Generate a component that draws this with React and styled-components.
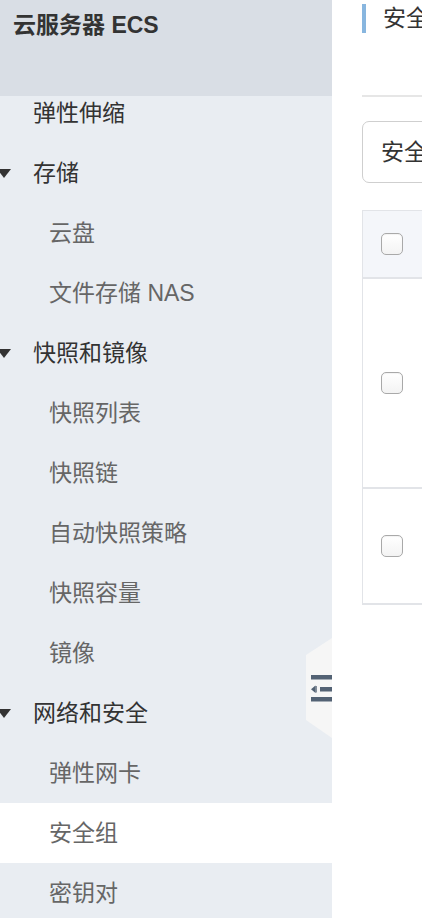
import React from "react";
import styled, { createGlobalStyle } from "styled-components";

const GlobalStyle = createGlobalStyle`
  html, body {
    margin: 0;
    padding: 0;
    background: #fff;
  }
  body {
    font-family: "Liberation Sans", "Noto Sans CJK SC", sans-serif;
  }
`;

const menu = [
  { label: "弹性伸缩", level: 0 },
  { label: "存储", level: 0, group: true },
  { label: "云盘", level: 1 },
  { label: "文件存储 NAS", level: 1 },
  { label: "快照和镜像", level: 0, group: true },
  { label: "快照列表", level: 1 },
  { label: "快照链", level: 1 },
  { label: "自动快照策略", level: 1 },
  { label: "快照容量", level: 1 },
  { label: "镜像", level: 1 },
  { label: "网络和安全", level: 0, group: true },
  { label: "弹性网卡", level: 1 },
  { label: "安全组", level: 1, active: true },
  { label: "密钥对", level: 1 },
];

const rows = [
  { height: 210 },
  { height: 114 },
];

function App() {
  return (
    <>
      <GlobalStyle />
      <Layout>
        <Sidebar>
          <SideHeader>云服务器 ECS</SideHeader>
          <MenuList>
            {menu.map((item) => (
              <MenuItem key={item.label} $level={item.level} $active={item.active}>
                {item.group && <Caret />}
                {item.label}
              </MenuItem>
            ))}
          </MenuList>
          <Toggle>
            <ToggleIcon width="26" height="30" viewBox="0 0 26 30">
              <rect x="5" y="2" width="21" height="4.5" fill="#536274" />
              <rect x="14" y="14" width="12" height="4.5" fill="#536274" />
              <path d="M5 16.2 L9.5 12.5 L9.5 20 Z" fill="#536274" />
              <rect x="9.5" y="13" width="1.2" height="6.5" fill="#536274" />
              <rect x="5" y="24" width="21" height="4.5" fill="#536274" />
            </ToggleIcon>
          </Toggle>
        </Sidebar>
        <Main>
          <TitleRow>
            <TitleBar />
            <Title>安全组</Title>
          </TitleRow>
          <Divider />
          <SelectBox>安全组ID</SelectBox>
          <Table>
            <HeadRow>
              <CheckCell>
                <Checkbox />
              </CheckCell>
            </HeadRow>
            {rows.map((r, i) => (
              <BodyRow key={i} style={{ height: r.height }}>
                <CheckCell>
                  <Checkbox />
                </CheckCell>
              </BodyRow>
            ))}
          </Table>
        </Main>
      </Layout>
    </>
  );
}

export default App;

const Layout = styled.div`
  display: flex;
  width: 422px;
  height: 918px;
  overflow: hidden;
`;

const Sidebar = styled.div`
  position: relative;
  flex: 0 0 332px;
  height: 100%;
  background: #e9edf2;
  overflow: hidden;
`;

const SideHeader = styled.div`
  position: relative;
  z-index: 1;
  height: 96px;
  box-sizing: border-box;
  padding: 9px 0 0 13px;
  background: #d9dee5;
  color: #333;
  font-size: 23px;
  font-weight: bold;
  line-height: 32px;
`;

const MenuList = styled.div`
  margin-top: -13px;
`;

const MenuItem = styled.div`
  position: relative;
  height: 60px;
  line-height: 60px;
  padding-left: ${(p) => (p.$level ? 49 : 33)}px;
  font-size: 23px;
  color: ${(p) => (p.$level ? "#666" : "#333")};
  background: ${(p) => (p.$active ? "#fff" : "transparent")};
  white-space: nowrap;
`;

const Caret = styled.span`
  position: absolute;
  left: -3px;
  top: 26px;
  width: 0;
  height: 0;
  border-left: 7px solid transparent;
  border-right: 7px solid transparent;
  border-top: 9px solid #333;
`;

const Toggle = styled.div`
  position: absolute;
  left: 306px;
  top: 638px;
  width: 26px;
  height: 100px;
  background: #f6f6f6;
  clip-path: polygon(100% 0, 100% 100%, 0 82%, 0 17%);
  display: flex;
  align-items: center;
`;

const ToggleIcon = styled.svg`
  display: block;
`;

const Main = styled.div`
  flex: 1;
  min-width: 0;
  padding: 4px 0 0 30px;
  overflow: hidden;
  background: #fff;
  white-space: nowrap;
`;

const TitleRow = styled.div`
  display: flex;
  align-items: center;
  height: 29px;
`;

const TitleBar = styled.div`
  flex: 0 0 4px;
  height: 29px;
  background: #88b6df;
  margin-right: 17px;
`;

const Title = styled.div`
  flex-shrink: 0;
  font-size: 23px;
  color: #333;
  line-height: 29px;
`;

const Divider = styled.div`
  margin-top: 62px;
  height: 2px;
  width: 200px;
  background: #e6e6e6;
`;

const SelectBox = styled.div`
  margin-top: 24px;
  width: 240px;
  height: 62px;
  box-sizing: border-box;
  border: 1px solid #cfcfcf;
  border-radius: 7px;
  padding-left: 18px;
  line-height: 60px;
  font-size: 23px;
  color: #333;
`;

const Table = styled.div`
  margin-top: 27px;
  width: 300px;
  border: 1px solid #e2e4e8;
  border-bottom-width: 2px;
`;

const HeadRow = styled.div`
  display: flex;
  align-items: center;
  height: 66px;
  background: #f4f6fa;
  border-bottom: 2px solid #e2e4e8;
`;

const BodyRow = styled.div`
  display: flex;
  align-items: center;
  box-sizing: border-box;
  border-bottom: 2px solid #e2e4e8;
  &:last-child {
    border-bottom: none;
  }
`;

const CheckCell = styled.div`
  padding-left: 18px;
`;

const Checkbox = styled.div`
  width: 22px;
  height: 22px;
  box-sizing: border-box;
  border: 1px solid #a9a9a9;
  border-radius: 5px;
  background: linear-gradient(#fff, #f3f3f3);
  box-shadow: inset 0 1px 1px rgba(0, 0, 0, 0.05);
`;
